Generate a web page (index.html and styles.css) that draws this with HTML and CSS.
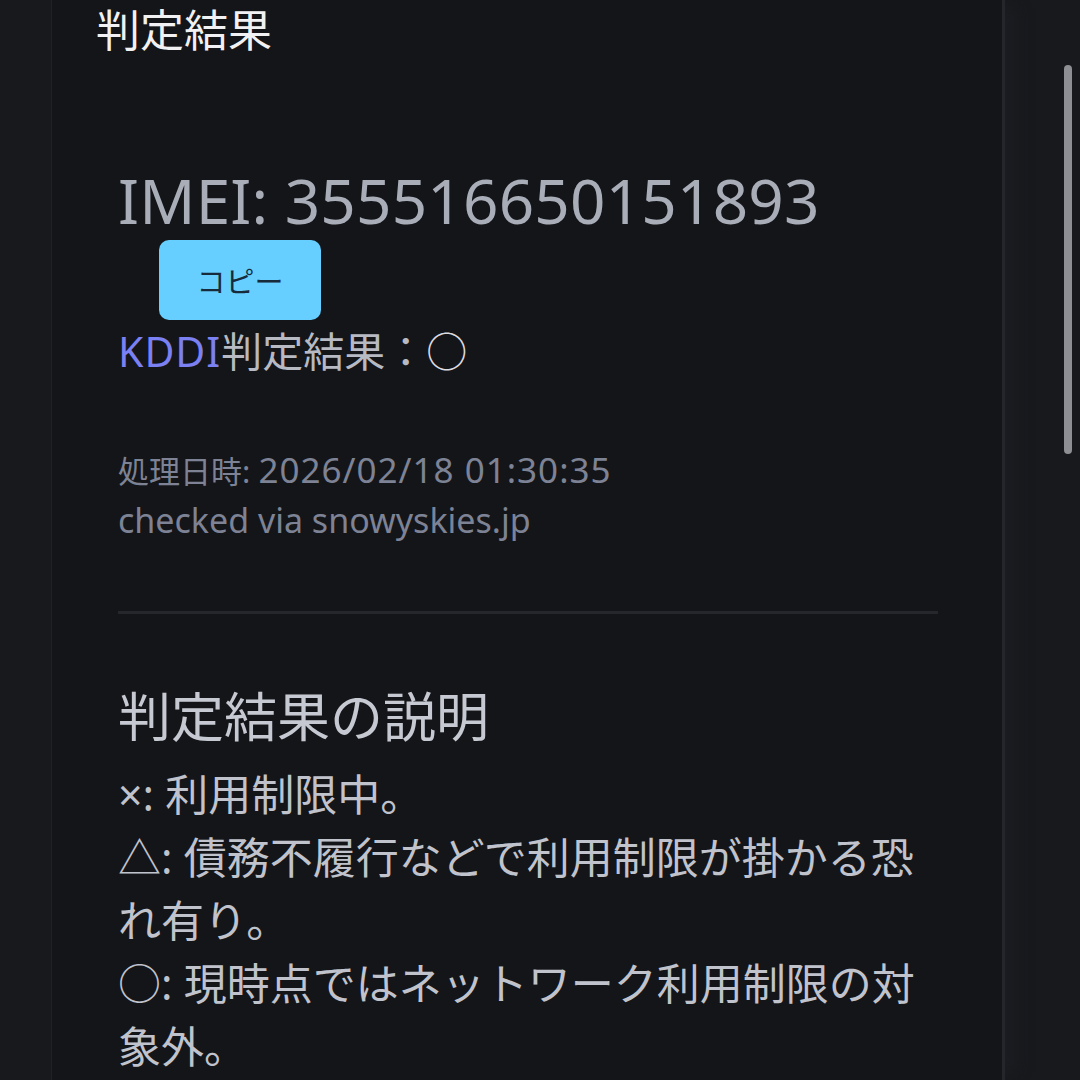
FILE: index.html
```html
<!DOCTYPE html>
<html lang="ja">
<head>
    <meta charset="UTF-8">
    <meta name="viewport" content="width=device-width, initial-scale=1.0">
    <title>判定結果</title>
    <link rel="stylesheet" href="styles.css">
</head>
<body>
    <div class="frame">
        <h1 class="page-title">判定結果</h1>

        <section class="result">
            <div class="imei">IMEI: 355516650151893</div>
            <button class="copy-btn">コピー</button>
            <div class="verdict"><span class="carrier">KDDI</span>判定結果：<span class="mark">○</span></div>

            <div class="meta">
                <div>処理日時: <time>2026/02/18 01:30:35</time></div>
                <div class="via">checked via snowyskies.jp</div>
            </div>

            <hr class="divider">

            <h2 class="legend-title">判定結果の説明</h2>
            <ul class="legend">
                <li>×: 利用制限中。</li>
                <li>△: 債務不履行などで利用制限が掛かる恐れ有り。</li>
                <li>○: 現時点ではネットワーク利用制限の対象外。</li>
            </ul>
        </section>
    </div>

    <div class="scrollbar"></div>
</body>
</html>
```

FILE: styles.css
```css
* {
    margin: 0;
    padding: 0;
    box-sizing: border-box;
}

body {
    background: #18191d;
    color: #c0c3cc;
    font-family: "Noto Sans", "Noto Sans CJK JP", sans-serif;
    height: 1080px;
    overflow: hidden;
}

.frame {
    margin-left: 51px;
    width: 954px;
    height: 1080px;
    background: #141519;
    border-left: 1px solid #202126;
    border-right: 3px solid #25262b;
    box-shadow: 18px 0 14px -8px #1c1d22;
}

.page-title {
    font-size: 44px;
    font-weight: normal;
    color: #f1f1f3;
    line-height: 60px;
    padding-left: 44px;
}

.result {
    padding-left: 66px;
    width: 886px;
}

.imei {
    margin-top: 100px;
    font-size: 62px;
    line-height: 80px;
    color: #a9adb8;
    letter-spacing: 0.2px;
}

.copy-btn {
    display: block;
    margin: 0 0 0 41px;
    width: 162px;
    height: 80px;
    border: none;
    border-radius: 10px;
    background: #66cfff;
    color: #182b3b;
    font-family: inherit;
    font-size: 29px;
}

.verdict {
    font-size: 41px;
    line-height: 62px;
    color: #b7bac3;
}

.carrier {
    color: #7b80f2;
    letter-spacing: 1px;
}

.mark {
    color: #dcdce0;
}

.meta {
    margin-top: 63px;
    font-size: 31px;
    line-height: 49px;
    color: #7d8395;
}

.meta time {
    font-size: 35px;
    letter-spacing: 1px;
}

.meta .via {
    font-size: 34px;
}

.divider {
    margin-top: 66px;
    width: 820px;
    height: 3px;
    border: none;
    background: #26272d;
}

.legend-title {
    margin-top: 71px;
    font-size: 53px;
    font-weight: normal;
    line-height: 64px;
    color: #c6c9d1;
}

.legend {
    list-style: none;
    width: 820px;
    margin-top: 14px;
    font-size: 43px;
    line-height: 63px;
    color: #c0c3cc;
}

.scrollbar {
    position: absolute;
    top: 65px;
    left: 1064px;
    width: 8px;
    height: 389px;
    border-radius: 4px;
    background: #8e8f94;
}
```
